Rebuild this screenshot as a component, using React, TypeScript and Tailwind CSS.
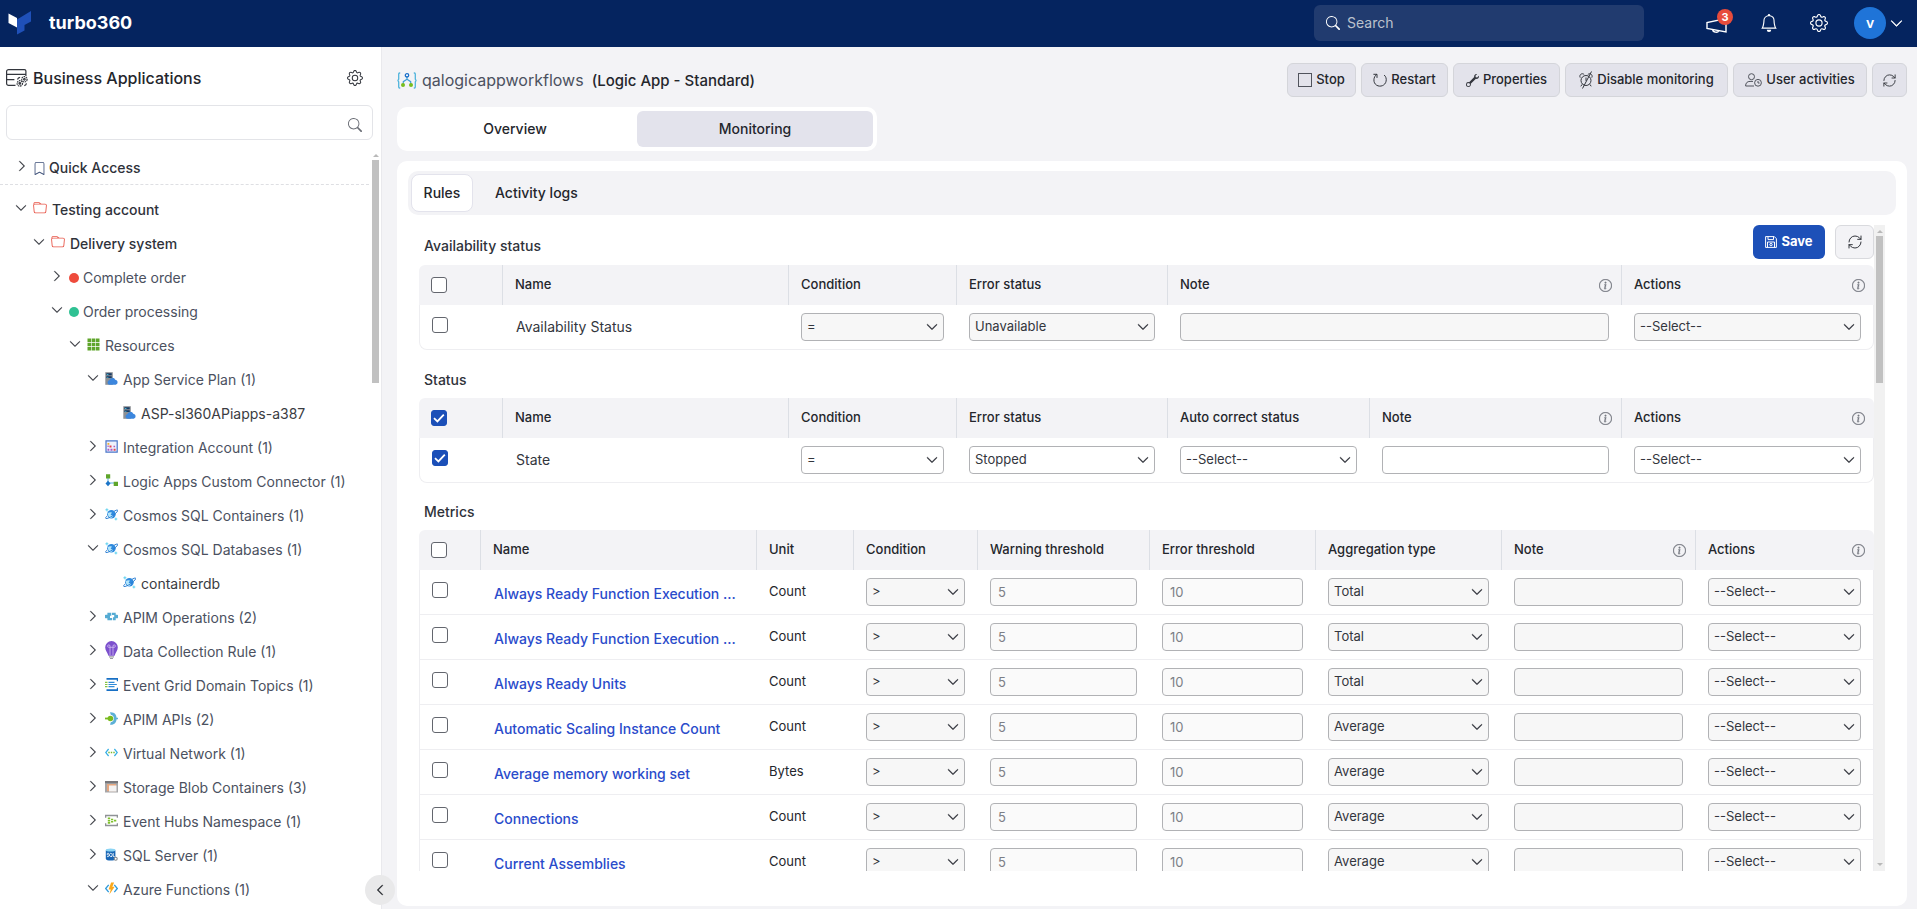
import type { ReactNode } from 'react';
import { BsBell, BsBookmark, BsChevronDown, BsChevronLeft, BsChevronRight, BsFolder, BsGear, BsInfoCircle, BsSearch, BsWrench } from 'react-icons/bs';
import { RefreshCw } from 'lucide-react';

/* ---------- drawings ---------- */

function Logo() {
  return (
    <svg width="24" height="24" viewBox="0 0 24 24">
      <path d="M0.5 2.5 9 7v9.5L0.5 12z" fill="#fff" />
      <path d="M9 8.5 23 0v10.5L16.500 14v5.500L9 23.500z" fill="#1f50b8" />
    </svg>
  );
}

function Megaphone() {
  return (
    <svg width="22" height="22" viewBox="0 0 22 22" fill="none" stroke="#fff" strokeWidth="1.4">
      <path d="M1 8.500v6l19 3.500V4.500L1 8.500zM6.500 15.600c.4 2.800 5.400 3.600 6.200 1.100" />
    </svg>
  );
}

function BusinessAppsIcon() {
  return (
    <svg width="22" height="18" viewBox="0 0 22 18" fill="none" stroke="#33363d" strokeWidth="1.200">
      <path d="M9.500 16.400H2.600a2 2 0 0 1-2-2V2.600a2 2 0 0 1 2-2h15.800a1.500 1.500 0 0 1 1.500 1.500V7M.6 5.400h19.300M.6 10.700h7.800" />
      <circle cx="13.800" cy="14.400" r="2.700" strokeDasharray="1.600 .7" />
      <circle cx="13.800" cy="14.400" r=".8" />
      <circle cx="18.400" cy="10.300" r="2.700" strokeDasharray="1.600 .7" />
      <circle cx="18.400" cy="10.300" r=".8" />
      <path d="M11.500 10.500q.6-2 2.600-2.200M20.500 14.400q-.4 1.800-2.200 2.300" />
    </svg>
  );
}

function LogicAppIcon() {
  return (
    <svg width="20" height="17" viewBox="0 0 20 17" fill="none">
      <path d="M3.200 1H2.600Q1.700 1 1.700 2v5q0 1.300-1.200 1.500 1.200.2 1.200 1.500v5q0 1 .9 1h.6M16.800 1h.6q.9 0 .9 1v5q0 1.300 1.200 1.500-1.200.2-1.200 1.500v5q0 1-.9 1h-.6" stroke="#50b4dc" strokeWidth="1.300" />
      <path d="M10 4v3.800M10 7.300 6.300 9.700v2.500M10 7.300l3.700 2.400v2.500" stroke="#3f9fd6" strokeWidth="1.200" />
      <circle cx="10" cy="3.300" r="1.700" stroke="#1b6fc9" strokeWidth="1.300" fill="#fff" />
      <circle cx="6" cy="13" r="2" fill="#78bd1e" />
      <circle cx="14" cy="13" r="2" fill="#78bd1e" />
    </svg>
  );
}

function StopIcon() {
  return (
    <svg width="14" height="14" viewBox="0 0 14 14" fill="none" stroke="#50535c">
      <rect x="0.500" y="0.500" width="13" height="13" />
    </svg>
  );
}

function RestartIcon() {
  return (
    <svg width="14" height="14" viewBox="0 0 14 14" fill="none" stroke="#33363d">
      <path d="M3.800 1.200C.2 3.900-.2 9.800 3.600 12.200c3.600 2.200 8.600.4 9.500-4 .5-2.400-.2-4.800-2-6.200M.4 1.300h3.600v3.600" />
    </svg>
  );
}

function AlarmOffIcon() {
  return (
    <svg width="14" height="18" viewBox="0 0 14 18" fill="none" stroke="#33363d">
      <circle cx="7" cy="9.500" r="5" />
      <path d="M1.200 6.600C-.2 4 3 1.300 5.200 3.600M12.800 6.600C14.200 4 11 1.300 8.800 3.600M7 6.500v3.400M3.200 13.300 1.800 15.300M10.800 13.300l1.400 2M3.500 17.500 12.500.5" />
    </svg>
  );
}

function UserClockIcon() {
  return (
    <svg width="17" height="14" viewBox="0 0 17 14" fill="none" stroke="#50535c">
      <circle cx="6.500" cy="3.700" r="3" />
      <path d="M9 13H.6c0-3 1.600-4.600 4.400-4.600h3" />
      <circle cx="13" cy="9.800" r="3.400" />
      <path d="M13 8v2h1.600" />
    </svg>
  );
}

function SaveIcon() {
  return (
    <svg width="12" height="12" viewBox="0 0 12 12" fill="none" stroke="#fff">
      <path d="M.6.6h8.700l2.100 2.100v8.700H.6zM3 .6v3h5.500v-3M2.500 11.400V6h7v5.400" />
      <circle cx="6" cy="8.600" r="1.200" />
    </svg>
  );
}

const icons: Record<string, ReactNode> = {
  bookmark: <BsBookmark size={13} className="text-[#3c4f78]" />,
  folder: <BsFolder size={14} className="text-[#e8574a]" />,
  red: <span className="block size-[10px] rounded-full bg-[#ee4b3c]" />,
  green: <span className="block size-[10px] rounded-full bg-[#2fc193]" />,
  grid: (
    <svg width="13" height="13" viewBox="0 0 13 13" fill="#5fa52a">
      <path d="M.5.500h3.600v3.600H.5zM4.700.500h3.600v3.600H4.700zM8.900.500h3.600v3.600H8.900zM.5 4.700h3.600v3.600H.5zM4.700 4.700h3.600v3.600H4.700zM8.900 4.700h3.600v3.600H8.900zM.5 8.900h3.600v3.600H.5zM4.700 8.900h3.600v3.600H4.700zM8.900 8.900h3.600v3.600H8.900z" />
    </svg>
  ),
  plan: (
    <svg width="13" height="13" viewBox="0 0 13 13">
      <path d="M.3.200h7.500v12.600H.3z" fill="#8b8f94" />
      <path d="M1.400 1.300h5.300v1.900H1.400zM1.400 4.200h5.300v1.900H1.400z" fill="#173a63" />
      <path d="M1.900 2h1.500v.7H1.900zM1.900 4.900h1.500v.7H1.900z" fill="#50e6ff" />
      <path d="M4.500 12.800a2.300 2.300 0 0 1-.2-4.500 3.200 3.200 0 0 1 6-.6 2.600 2.600 0 0 1 .4 5.100z" fill="#3c86dd" />
    </svg>
  ),
  integration: (
    <svg width="13" height="13" viewBox="0 0 13 13">
      <path d="M1 .9h11.200v11.200H1z" fill="#eef1fb" stroke="#4a76c9" strokeWidth="1.200" />
      <path d="M2.500 3h1.800v1.800H2.500z" fill="#efb02c" />
      <path d="M4.500 5.400h2v2h-2zM8.600 8.700h2v2h-2z" fill="#e5434a" />
      <path d="M2.500 8.700h1.800v2H2.500zM5.500 8.700h2v2h-2zM2.500 5.600h1.200v1.500H2.500zM8.500 5.700h1.600v1.600H8.500z" fill="#a65bc6" />
    </svg>
  ),
  connector: (
    <svg width="13" height="13" viewBox="0 0 13 13">
      <path d="M3 3v6h7" fill="none" stroke="#59a9df" />
      <path d="M1 .2h4.200v4.200H1zM8.700 7.800H13V12H8.700z" fill="#5fa52a" />
      <path d="M3 6.800 5.500 9.500 3 12.200.5 9.500z" fill="#1b74c7" />
    </svg>
  ),
  cosmos: (
    <svg width="13" height="13" viewBox="0 0 13 13">
      <circle cx="6.400" cy="6.300" r="4.300" fill="#2f8ade" />
      <path d="M2.600 5.200q2.200-1.600 4.400-.6l-1.400 2.200 2.600 1q-.8 2.300-3 2.500Q3 9 2.600 5.200z" fill="#b4e6fb" />
      <path d="M9.200 3.100Q13.400.9 12.600 3C11.600 5.400 3.300 11.300.9 10.500-.2 9.900 2 8 2 8" fill="none" stroke="#2378cf" strokeWidth=".9" />
      <path d="M1.900.3v3M.4 1.800h3M10.900 9.600v2.800M9.500 11h2.800" stroke="#55cfee" strokeWidth=".9" />
    </svg>
  ),
  operations: (
    <svg width="13" height="13" viewBox="0 0 13 13" fill="#55abd3">
      <path d="M2.400 2.700h3.900v3H5v2.300h2.200v2.300H2.400V8.200H1a1.600 1.600 0 0 1 0-3.400h1.400zM7 2.700h3.700v2.100H12a1.600 1.600 0 0 1 0 3.400h-1.300v2.100H8V7.300h1.200V5H7z" />
    </svg>
  ),
  bulb: (
    <svg width="13" height="18" viewBox="0 0 13 18">
      <path d="M6.500 0a6.300 6.300 0 0 1 6.300 6.400c0 3-2.600 5.300-3.200 8.400H3.400C2.800 11.700.2 9.400.2 6.400A6.300 6.300 0 0 1 6.500 0z" fill="#7c50cd" />
      <path d="M5 14V6.300M8 14V6.300M5 6.300H3.900a1.200 1.200 0 1 1 1.100-1.200zM8 6.300h1.100A1.200 1.200 0 1 0 8 5.100zM5 6.300h3" fill="none" stroke="#ddccf7" strokeWidth=".7" />
      <path d="M4 15.200h5v1.200H4zM5 16.900h3v1H5z" fill="#9a9ba0" />
    </svg>
  ),
  eventGrid: (
    <svg width="13" height="13" viewBox="0 0 13 13">
      <path d="M1.500 0H13v3.200h-1.200V1.800H1.500zM1.500 13H13V9.800h-1.200v1.400H1.500z" fill="#1870c5" />
      <path d="M3.500 4.300h6M3.500 6.500h8.300M3.500 8.700h6" stroke="#2e8ad8" strokeWidth="1.200" />
      <path d="M0 4.300h2.500M0 6.500h2.500M0 8.700h2.500" stroke="#86c440" strokeWidth="1.200" />
    </svg>
  ),
  api: (
    <svg width="13" height="13" viewBox="0 0 13 13">
      <path d="M5 .2c4.600-.4 6.600 2.500 6.600 6.300S9.600 13.200 5 12.800l.8-2.600c2-.2 3-1.700 3-3.700S7.800 3 5.800 2.800z" fill="#5cb0d6" />
      <path d="M11 5.700h2v1.600h-2z" fill="#5cb0d6" />
      <circle cx="5.400" cy="6.500" r="2.800" fill="#79bb1e" />
      <path d="M0 5.600h4v1.800H0z" fill="#79bb1e" />
    </svg>
  ),
  vnet: (
    <svg width="13" height="13" viewBox="0 0 13 13" fill="none">
      <path d="M3.600 3 .7 6.500 3.600 10M9.400 3l2.900 3.500L9.400 10" stroke="#35aee4" strokeWidth="1.200" />
      <path d="M3.300 6.500h1.400M5.800 6.500h1.400M8.300 6.500h1.400" stroke="#77b82a" strokeWidth="1.500" />
    </svg>
  ),
  blob: (
    <svg width="13" height="13" viewBox="0 0 13 13">
      <path d="M0 1h13v11.500H0z" fill="#a6a6a8" />
      <path d="M0 1h13v2.200H0z" fill="#77777b" />
      <path d="M2 4h9v7.200H2z" fill="#e5a780" />
      <path d="M4 5.500h7.500v6H4z" fill="#f5f3f2" />
    </svg>
  ),
  eventHubs: (
    <svg width="13" height="13" viewBox="0 0 13 13">
      <path d="M0 .8h13v3h-1.300V2.300H1.300v1.500H0zM0 12.200h13v-3h-1.300v1.500H1.300V9.200H0z" fill="#8f9296" />
      <path d="M2.800 3.600h2.400v1.600H2.800zM2.800 5.900h2.400v1.500H2.800zM2.800 8.100h2.400v1.600H2.800zM6 4.700h2.200v1.500H6zM6 7h2.200v1.500H6zM8.900 5.800h2.400v1.700H8.900z" fill="#7fc12c" />
    </svg>
  ),
  sql: (
    <svg width="13" height="13" viewBox="0 0 13 13">
      <path d="M.8 2.200v8.500c0 2.500 9.600 2.500 9.600 0V2.200z" fill="#1966b5" />
      <ellipse cx="5.600" cy="2" rx="4.800" ry="1.500" fill="#8bd4f4" />
      <path d="M4 5.400q-2-.6-2 .6t1.700 1-.2 1.600H2M5.800 5.300a1.400 1.600 0 1 0 .01 0M6 8l1 1M8.200 5v3.500h1.500" fill="none" stroke="#fff" strokeWidth=".8" />
      <circle cx="10.700" cy="10.800" r="1.500" fill="#fff" stroke="#85888c" strokeWidth="1.100" />
    </svg>
  ),
  functions: (
    <svg width="13" height="13" viewBox="0 0 13 13">
      <path d="M3.700 2.800.7 6.500l3 3.700M9.300 2.800l3 3.700-3 3.700" fill="none" stroke="#2f9bdc" strokeWidth="1.300" />
      <path d="M6.100.500h3L7.300 4.700h2.400L4.300 12.600l1.500-5.200H3.600z" fill="#fba81a" />
    </svg>
  ),
};

/* ---------- sidebar ---------- */

type TreeNode = { label: string; depth: number; icon: string; state: 'open' | 'closed' | 'leaf' };

const tree: TreeNode[] = [
  { label: 'Testing account', depth: 0, icon: 'folder', state: 'open' },
  { label: 'Delivery system', depth: 1, icon: 'folder', state: 'open' },
  { label: 'Complete order', depth: 2, icon: 'red', state: 'closed' },
  { label: 'Order processing', depth: 2, icon: 'green', state: 'open' },
  { label: 'Resources', depth: 3, icon: 'grid', state: 'open' },
  { label: 'App Service Plan (1)', depth: 4, icon: 'plan', state: 'open' },
  { label: 'ASP-sl360APiapps-a387', depth: 5, icon: 'plan', state: 'leaf' },
  { label: 'Integration Account (1)', depth: 4, icon: 'integration', state: 'closed' },
  { label: 'Logic Apps Custom Connector (1)', depth: 4, icon: 'connector', state: 'closed' },
  { label: 'Cosmos SQL Containers (1)', depth: 4, icon: 'cosmos', state: 'closed' },
  { label: 'Cosmos SQL Databases (1)', depth: 4, icon: 'cosmos', state: 'open' },
  { label: 'containerdb', depth: 5, icon: 'cosmos', state: 'leaf' },
  { label: 'APIM Operations (2)', depth: 4, icon: 'operations', state: 'closed' },
  { label: 'Data Collection Rule (1)', depth: 4, icon: 'bulb', state: 'closed' },
  { label: 'Event Grid Domain Topics (1)', depth: 4, icon: 'eventGrid', state: 'closed' },
  { label: 'APIM APIs (2)', depth: 4, icon: 'api', state: 'closed' },
  { label: 'Virtual Network (1)', depth: 4, icon: 'vnet', state: 'closed' },
  { label: 'Storage Blob Containers (3)', depth: 4, icon: 'blob', state: 'closed' },
  { label: 'Event Hubs Namespace (1)', depth: 4, icon: 'eventHubs', state: 'closed' },
  { label: 'SQL Server (1)', depth: 4, icon: 'sql', state: 'closed' },
  { label: 'Azure Functions (1)', depth: 4, icon: 'functions', state: 'open' },
];

const indent = ['pl-[15px]', 'pl-[33px]', 'pl-[51px]', 'pl-[69px]', 'pl-[87px]', 'pl-[105px]'];

function TreeRow({ node }: { node: TreeNode }) {
  const tone = node.depth < 2 ? 'font-medium text-[#2f323a]' : node.state === 'leaf' ? 'text-[#3a3c42]' : 'text-[#4b5160]';
  return (
    <li className={`flex h-[34px] items-center whitespace-nowrap ${indent[node.depth]}`}>
      <button className="mr-[6px] flex w-3 justify-center pb-1 text-[#2b2e35]" aria-label={`Toggle ${node.label}`}>
        {node.state === 'open' && <BsChevronDown size={12} strokeWidth={0.5} />}
        {node.state === 'closed' && <BsChevronRight size={12} strokeWidth={0.5} />}
      </button>
      <span className={node.depth === 2 ? 'mr-1' : 'mr-[5px] pb-1'}>{icons[node.icon]}</span>
      <a href="#" className={`text-sm ${tone}`}>{node.label}</a>
    </li>
  );
}

function Sidebar() {
  return (
    <aside className="relative flex w-[382px] shrink-0 flex-col border-r border-[#e9e9ed] bg-white">
      <div className="flex h-[58px] shrink-0 items-center pt-1 pl-[6px] pr-[18px]">
        <BusinessAppsIcon />
        <h2 className="ml-[5px] flex-1 text-base font-medium text-[#24262c]">Business Applications</h2>
        <button aria-label="Settings"><BsGear size={16} className="text-[#33363d]" /></button>
      </div>
      <div className="ml-[6px] mr-2 flex h-[35px] shrink-0 items-center rounded-md border border-[#e3e4e8] pr-[10px]">
        <input aria-label="Search applications" className="h-full min-w-0 flex-1 px-2 text-sm outline-none" />
        <BsSearch size={14} className="mt-1 text-[#6b6e76]" />
      </div>
      <div className="mt-[14px] flex min-h-0 flex-1">
        <div className="min-w-0 flex-1 overflow-hidden">
          <div className="flex h-[31px] items-center border-b border-dashed border-[#dedfe3] pb-[2px] pl-4">
            <button className="mr-[5px] flex w-3 justify-center pb-1 text-[#2b2e35]" aria-label="Expand quick access">
              <BsChevronRight size={12} strokeWidth={0.5} />
            </button>
            <span className="mr-[3px]">{icons.bookmark}</span>
            <a href="#" className="text-sm font-medium text-[#2f323a]">Quick Access</a>
          </div>
          <ul className="pt-2">
            {tree.map(n => <TreeRow key={n.label} node={n} />)}
          </ul>
        </div>
        {/* scrollbar */}
        <div className="mr-[2px] ml-[3px] flex w-[7px] flex-col items-center">
          <span className="border-x-[3px] border-b-[3px] border-x-transparent border-b-[#b9b9b9]" />
          <span className="mt-[3px] h-[223px] w-full bg-[#c1c1c1]" />
        </div>
      </div>
      <button
        aria-label="Collapse sidebar"
        className="absolute -right-[14px] bottom-[4px] flex size-[30px] items-center justify-center rounded-full bg-[#e9e9ea] text-[#1f2127]"
      >
        <BsChevronLeft size={12} strokeWidth={0.8} />
      </button>
    </aside>
  );
}

/* ---------- top bar ---------- */

function TopBar() {
  return (
    <header className="flex h-[47px] shrink-0 items-center bg-[#05245f] pb-px pl-2 pr-[14px] text-white">
      <Logo />
      <span className="ml-[17px] flex-1 text-lg font-bold">turbo360</span>
      <div className="mr-[62px] flex h-9 w-[330px] items-center gap-[7px] rounded-md bg-[#213b6f] px-3">
        <BsSearch size={14} />
        <input
          aria-label="Search"
          placeholder="Search"
          className="min-w-0 flex-1 bg-transparent text-sm outline-none placeholder:text-[#bcc2cd]"
        />
      </div>
      <button className="relative mr-8 mt-1" aria-label="Announcements">
        <Megaphone />
        <span className="absolute -right-[5px] -top-[5px] flex size-4 items-center justify-center rounded-full bg-[#e74c3c] text-[11px] font-bold">3</span>
      </button>
      <button className="mr-8" aria-label="Notifications"><BsBell size={18} /></button>
      <button className="mr-[26px]" aria-label="Settings"><BsGear size={18} /></button>
      <button className="flex items-center gap-1" aria-label="Account">
        <span className="flex size-8 items-center justify-center rounded-full bg-[#1f74d8] text-sm font-semibold">v</span>
        <BsChevronDown size={13} strokeWidth={0.8} />
      </button>
    </header>
  );
}

/* ---------- form controls ---------- */

function Select({ value, label, disabled }: { value: string; label: string; disabled?: boolean }) {
  return (
    <div className="relative">
      <select
        aria-label={label}
        disabled={disabled}
        className="block h-7 w-full appearance-none rounded border border-[#b1b2b5] bg-white pl-[5px] pr-6 text-[13px] text-[#33363d] disabled:bg-[#f7f7f7] disabled:opacity-100"
      >
        <option>{value}</option>
      </select>
      <BsChevronDown size={12} strokeWidth={0.8} className="pointer-events-none absolute right-[6px] top-2 text-[#2b2e35]" />
    </div>
  );
}

function TextBox({ label, placeholder, disabled }: { label: string; placeholder?: string; disabled?: boolean }) {
  return (
    <input
      aria-label={label}
      placeholder={placeholder}
      disabled={disabled}
      className={`block h-7 w-full rounded border border-[#b1b2b5] px-[7px] text-[13px] placeholder:text-[#7c7f86] ${placeholder ? 'bg-[#fafafa]' : disabled ? 'bg-[#f7f7f7]' : 'bg-white'}`}
    />
  );
}

function CheckBox({ label, checked }: { label: string; checked?: boolean }) {
  return (
    <span className="relative block size-4">
      <input
        type="checkbox"
        aria-label={label}
        defaultChecked={checked}
        className="block size-4 appearance-none rounded-[3px] border border-[#63666e] bg-white checked:border-[#1b4fb8] checked:bg-[#1b4fb8]"
      />
      {checked && (
        <svg width="16" height="16" viewBox="0 0 16 16" className="pointer-events-none absolute inset-0" fill="none" stroke="#fff" strokeWidth="1.800">
          <path d="M3 8.200 6.400 11.400 12.800 4.600" />
        </svg>
      )}
    </span>
  );
}

/* ---------- tables ---------- */

type Column = { title: string; width: string; info?: boolean };

function RuleTable({ name, columns, checked, children }: { name: string; columns: Column[]; checked?: boolean; children: ReactNode }) {
  return (
    <div className="overflow-hidden rounded-t-md">
      <table className="w-full table-fixed border-separate border-spacing-0 text-left">
        <thead>
          <tr className="h-10 bg-[#f3f3f6]">
            {columns.map(c => (
              <th key={c.title || 'check'} className={`border-r border-[#dcdfe5] px-3 py-0 text-[13px] font-medium text-[#24262c] last:border-r-0 ${c.width}`}>
                {c.title ? (
                  <div className="flex items-center justify-between">
                    {c.title}
                    {c.info && <BsInfoCircle size={13} strokeWidth={0.4} className="-mr-[3px] text-[#777a82]" />}
                  </div>
                ) : (
                  <CheckBox label={`Select all ${name}`} checked={checked} />
                )}
              </th>
            ))}
          </tr>
        </thead>
        <tbody>{children}</tbody>
      </table>
    </div>
  );
}

function Row({ name, checked, link, children }: { name: string; checked?: boolean; link?: boolean; children: ReactNode[] }) {
  const line = 'h-[45px] border-b border-[#eeeef1]';
  return (
    <tr className="group text-[13px] text-[#24262c]">
      <td className={`${line} border-l px-3 pb-0 pt-3 align-top group-last:rounded-bl-lg`}>
        <CheckBox label={`Select ${name}`} checked={checked} />
      </td>
      <td className={`${line} truncate pb-0 pl-[13px] pr-3 ${link ? 'pt-1' : 'pt-0'}`}>
        {link ? <a href="#" className="text-sm font-medium text-[#2a4bcb]">{name}</a> : <span className="text-sm text-[#33363d]">{name}</span>}
      </td>
      {children.map((cell, i) => (
        <td key={i} className={`${line} py-0 pl-3 pr-[13px] last:border-r last:pr-3 group-last:last:rounded-br-lg`}>{cell}</td>
      ))}
    </tr>
  );
}

const availabilityColumns: Column[] = [
  { title: '', width: 'w-[84px]' },
  { title: 'Name', width: 'w-[286px]' },
  { title: 'Condition', width: 'w-[168px]' },
  { title: 'Error status', width: 'w-[211px]' },
  { title: 'Note', width: '', info: true },
  { title: 'Actions', width: 'w-[252px]', info: true },
];

const statusColumns: Column[] = [
  { title: '', width: 'w-[84px]' },
  { title: 'Name', width: 'w-[286px]' },
  { title: 'Condition', width: 'w-[168px]' },
  { title: 'Error status', width: 'w-[211px]' },
  { title: 'Auto correct status', width: 'w-[202px]' },
  { title: 'Note', width: '', info: true },
  { title: 'Actions', width: 'w-[252px]', info: true },
];

const metricColumns: Column[] = [
  { title: '', width: 'w-[62px]' },
  { title: 'Name', width: '' },
  { title: 'Unit', width: 'w-[97px]' },
  { title: 'Condition', width: 'w-[124px]' },
  { title: 'Warning threshold', width: 'w-[172px]' },
  { title: 'Error threshold', width: 'w-[166px]' },
  { title: 'Aggregation type', width: 'w-[186px]' },
  { title: 'Note', width: 'w-[194px]', info: true },
  { title: 'Actions', width: 'w-[178px]', info: true },
];

const metrics = [
  { name: 'Always Ready Function Execution ...', unit: 'Count', aggregation: 'Total' },
  { name: 'Always Ready Function Execution ...', unit: 'Count', aggregation: 'Total' },
  { name: 'Always Ready Units', unit: 'Count', aggregation: 'Total' },
  { name: 'Automatic Scaling Instance Count', unit: 'Count', aggregation: 'Average' },
  { name: 'Average memory working set', unit: 'Bytes', aggregation: 'Average' },
  { name: 'Connections', unit: 'Count', aggregation: 'Average' },
  { name: 'Current Assemblies', unit: 'Count', aggregation: 'Average' },
];

function Rules() {
  const title = 'flex items-center pl-[5px] pt-[2px] text-sm font-medium text-[#2f323a]';
  return (
    <div className="min-w-0 flex-1 overflow-hidden">
      <div className="flex h-10 items-start">
        <h3 className={`${title} h-10 flex-1`}>Availability status</h3>
        <button className="mr-[10px] flex h-[34px] w-[72px] items-center justify-center gap-1 rounded-md bg-[#1d50b8] text-[13px] font-bold text-white">
          <SaveIcon />
          Save
        </button>
        <button aria-label="Refresh rules" className="flex h-[34px] w-[39px] items-center justify-center rounded-md border border-[#d9dade] bg-[#f3f3f6]">
          <RefreshCw size={16} strokeWidth={1.5} className="text-[#33363d]" />
        </button>
      </div>
      <RuleTable name="availability" columns={availabilityColumns}>
        <Row name="Availability Status">
          <Select label="Condition" value="=" disabled />
          <Select label="Error status" value="Unavailable" disabled />
          <TextBox label="Note" disabled />
          <Select label="Actions" value="--Select--" disabled />
        </Row>
      </RuleTable>

      <h3 className={`${title} mt-[10px] h-[38px]`}>Status</h3>
      <RuleTable name="status" columns={statusColumns} checked>
        <Row name="State" checked>
          <Select label="Condition" value="=" />
          <Select label="Error status" value="Stopped" />
          <Select label="Auto correct status" value="--Select--" />
          <TextBox label="Note" />
          <Select label="Actions" value="--Select--" />
        </Row>
      </RuleTable>

      <h3 className={`${title} mt-[9px] h-[38px]`}>Metrics</h3>
      <RuleTable name="metrics" columns={metricColumns}>
        {metrics.map((m, i) => (
          <Row key={i} name={m.name} link>
            <span>{m.unit}</span>
            <Select label="Condition" value=">" disabled />
            <TextBox label="Warning threshold" placeholder="5" disabled />
            <TextBox label="Error threshold" placeholder="10" disabled />
            <Select label="Aggregation type" value={m.aggregation} disabled />
            <TextBox label="Note" disabled />
            <Select label="Actions" value="--Select--" disabled />
          </Row>
        ))}
      </RuleTable>
    </div>
  );
}

/* ---------- page ---------- */

const actions = [
  { label: 'Stop', icon: <StopIcon />, width: 'w-[69px]' },
  { label: 'Restart', icon: <RestartIcon />, width: 'w-[87px]' },
  { label: 'Properties', icon: <BsWrench size={13} className="-scale-x-100 text-[#33363d]" />, width: 'w-[107px]' },
  { label: 'Disable monitoring', icon: <AlarmOffIcon />, width: 'w-[163px]' },
  { label: 'User activities', icon: <UserClockIcon />, width: 'w-[134px]' },
];

export default function App() {
  return (
    <div className="flex h-screen flex-col overflow-hidden bg-[#f3f3f6] font-[Inter,sans-serif]">
      <TopBar />
      <div className="flex min-h-0 flex-1">
        <Sidebar />
        <main className="flex min-w-0 flex-1 flex-col pb-[3px] pl-[15px] pr-[10px] pt-4">
          <div className="flex shrink-0 items-center">
            <LogicAppIcon />
            <h1 className="ml-[5px] flex-1 text-[15px] font-medium text-[#24262c]">
              <span className="mr-1 text-base font-normal text-[#4b5160]">qalogicappworkflows</span>
              {' '}(Logic App - Standard)
            </h1>
            <div className="flex gap-[5px]">
              {actions.map(a => (
                <button
                  key={a.label}
                  className={`flex h-[34px] items-center justify-center gap-1 whitespace-nowrap rounded-md border border-[#d4d5da] bg-[#e3e3eb] text-[13px] font-medium text-[#24262c] ${a.width}`}
                >
                  {a.icon}
                  {a.label}
                </button>
              ))}
              <button aria-label="Refresh" className="flex h-[34px] w-[35px] items-center justify-center rounded-md border border-[#d4d5da] bg-[#e3e3eb]">
                <RefreshCw size={15} strokeWidth={1.5} className="text-[#33363d]" />
              </button>
            </div>
          </div>

          <nav className="mt-[10px] grid h-11 w-[480px] shrink-0 grid-cols-2 rounded-[10px] bg-white p-1 text-sm font-medium text-[#24262c]">
            <button className="rounded-md pr-2">Overview</button>
            <button className="rounded-md bg-[#e3e3ec]">Monitoring</button>
          </nav>

          <section className="mt-[10px] flex min-h-0 flex-1 flex-col rounded-[10px] bg-white px-[11px] pb-[35px] pt-[10px]">
            <nav className="flex h-11 shrink-0 items-center rounded-[10px] bg-[#f3f3f6] p-[3px] text-sm font-medium text-[#24262c]">
              <button className="h-[38px] w-[62px] rounded-lg border border-[#e3e3ec] bg-white">Rules</button>
              <button className="ml-[22px]">Activity logs</button>
            </nav>
            <div className="mt-[10px] flex min-h-0 flex-1 pl-[11px] pr-[11px]">
              <Rules />
              {/* scrollbar */}
              <div className="flex w-[11px] shrink-0 flex-col items-center bg-[#f1f1f1] py-[5px]">
                <span className="border-x-[3px] border-b-[3px] border-x-transparent border-b-[#b9b9b9]" />
                <span className="mt-[3px] h-[147px] w-[7px] bg-[#c1c1c1]" />
                <span className="mt-auto border-x-[3px] border-t-[3px] border-x-transparent border-t-[#b9b9b9]" />
              </div>
            </div>
          </section>
        </main>
      </div>
    </div>
  );
}
